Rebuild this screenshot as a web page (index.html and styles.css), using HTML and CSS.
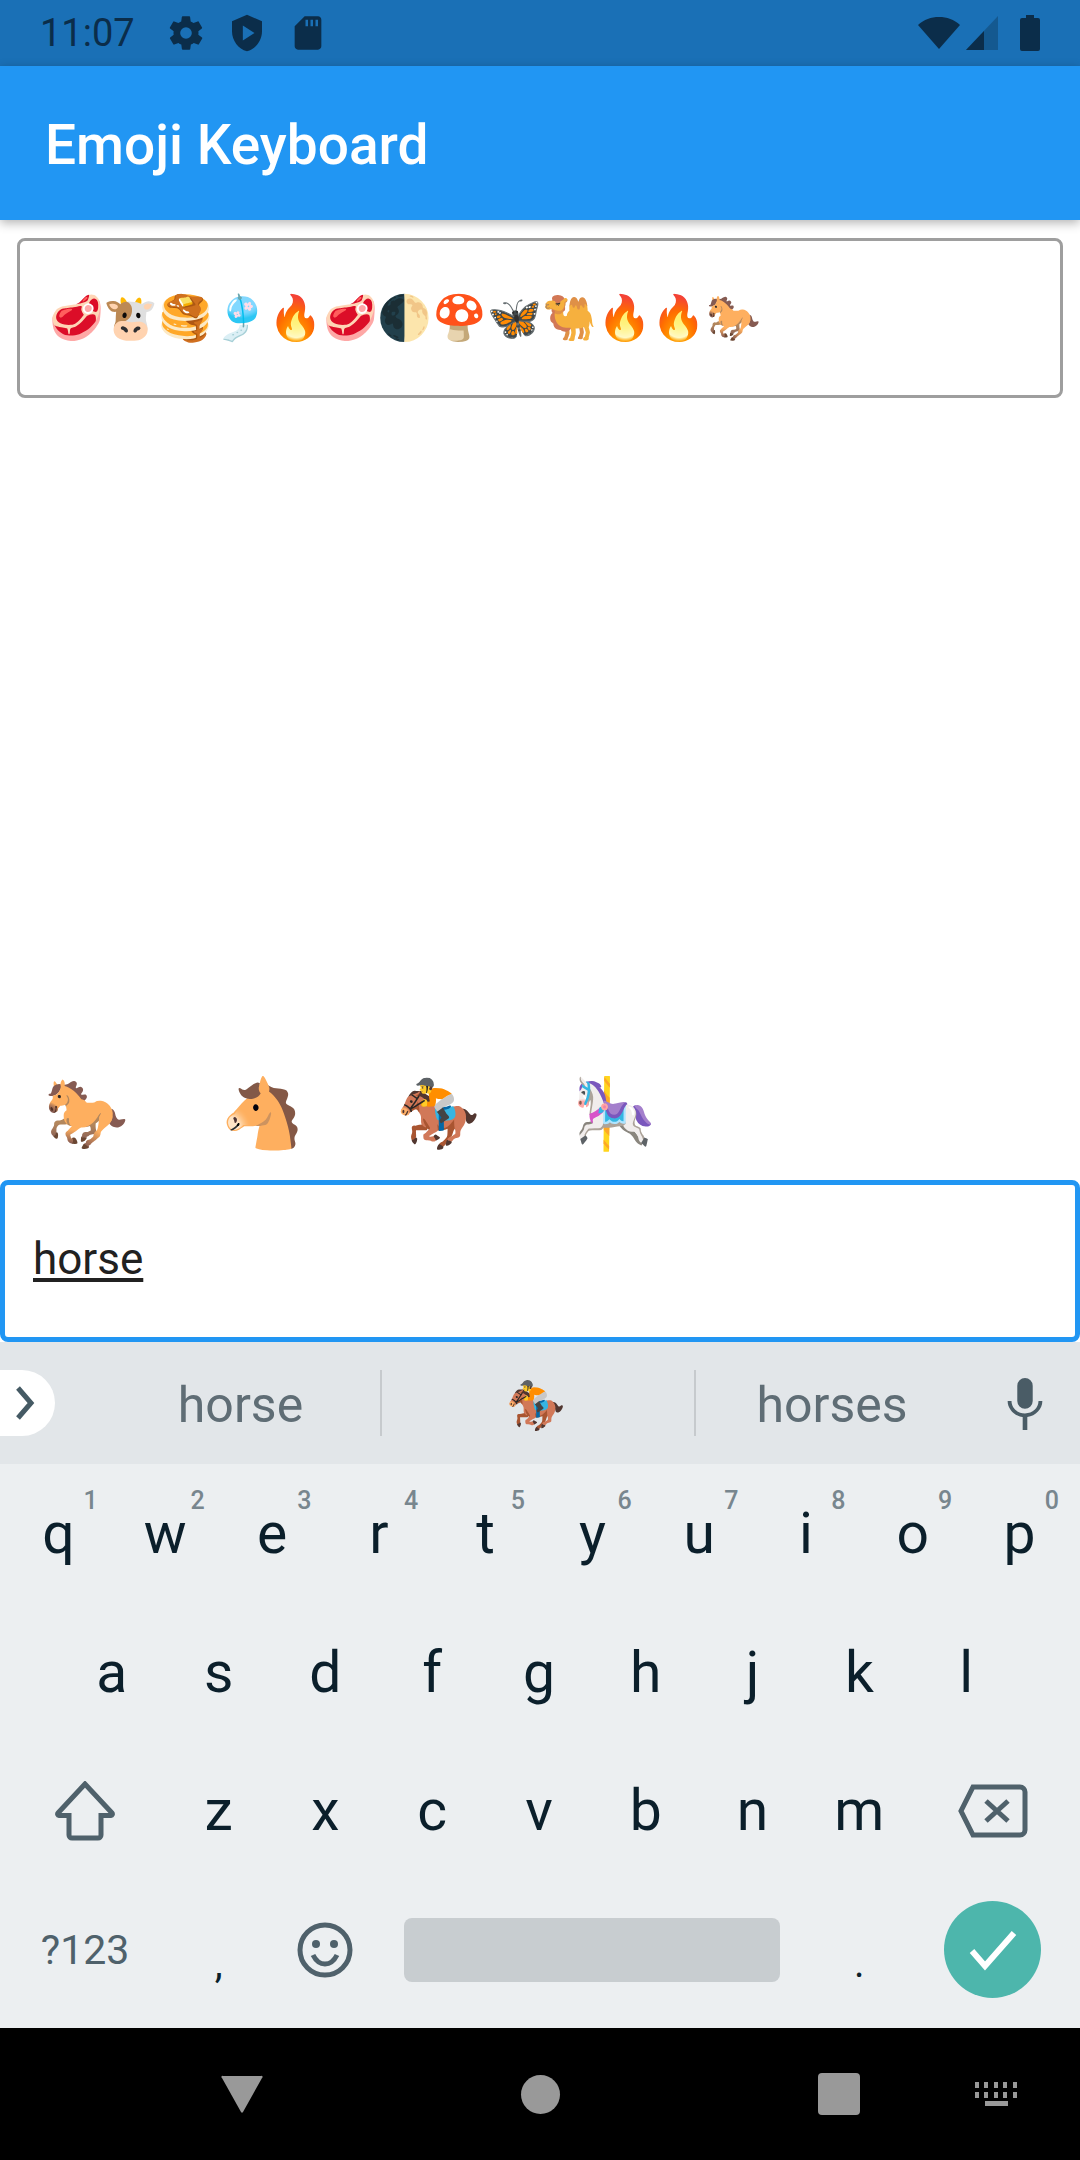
FILE: index.html
```html
<!DOCTYPE html>
<html lang="en">
<head>
<meta charset="utf-8">
<title>Emoji Keyboard</title>
<link rel="stylesheet" href="styles.css">
</head>
<body>
<div class="screen">
  <div class="status">
    <span class="time">11:07</span>
    <svg class="si gear" viewBox="0 0 24 24"><path d="M19.4 13c.04-.33.1-.66.1-1s-.06-.67-.1-1l2.1-1.65c.2-.15.25-.42.12-.64l-2-3.46c-.12-.22-.4-.3-.6-.22l-2.5 1c-.52-.4-1.08-.73-1.7-.98l-.37-2.65A.5.5 0 0 0 14 2h-4a.5.5 0 0 0-.5.42l-.37 2.65c-.62.25-1.18.58-1.7.98l-2.5-1a.5.5 0 0 0-.6.22l-2 3.46c-.13.22-.07.49.12.64L4.6 11c-.04.33-.1.66-.1 1s.06.67.1 1l-2.1 1.65c-.2.15-.25.42-.12.64l2 3.46c.12.22.4.3.6.22l2.5-1c.52.4 1.08.73 1.7.98l.37 2.65c.05.24.26.42.5.42h4c.25 0 .46-.18.5-.42l.37-2.65c.62-.25 1.18-.58 1.7-.98l2.5 1c.22.08.48 0 .6-.22l2-3.46c.13-.22.07-.49-.12-.64zM12 15.5a3.5 3.5 0 1 1 0-7 3.500 3.500 0 0 1 0 7z"/></svg>
    <svg class="si shield" viewBox="0 0 24 24"><path fill-rule="evenodd" d="M12 1 3 5v6c0 5.600 3.800 10.700 9 12 5.200-1.300 9-6.400 9-12V5zM9.500 7.500v9l7-4.500z"/></svg>
    <svg class="si sd" viewBox="0 0 24 24"><path fill-rule="evenodd" d="M18 2h-8L4 8v12c0 1.100.9 2 2 2h12c1.100 0 2-.9 2-2V4c0-1.100-.9-2-2-2zM12 8h-1.500V4H12zm3 0h-1.500V4H15zm3 0h-1.500V4H18z"/></svg>
    <span class="spacer"></span>
    <svg class="sr wifi" viewBox="0 0 44 34"><path d="M22 33 1 9C7 3.500 14 1 22 1s15 2.500 21 8z"/></svg>
    <svg class="sr cell" viewBox="0 0 34 36"><path class="dim" d="M33 1v34H1z"/><path d="M19 16v19H1z"/></svg>
    <svg class="sr batt" viewBox="0 0 20 36"><path d="M6 0h8v3h4a2 2 0 0 1 2 2v29a2 2 0 0 1-2 2H2a2 2 0 0 1-2-2V5a2 2 0 0 1 2-2h4z"/></svg>
  </div>
  <header class="appbar"><h1>Emoji Keyboard</h1></header>
  <main class="content">
    <div class="output">
      <span class="em">🥩</span><span class="em">🐮</span><span class="em">🥞</span><span class="em">🎐</span><span class="em">🔥</span><span class="em">🥩</span><span class="em">🌓</span><span class="em">🍄</span><span class="em">🦋</span><span class="em">🐫</span><span class="em">🔥</span><span class="em">🔥</span><span class="em">🐎</span>
    </div>
    <div class="grow"></div>
    <div class="results">
      <span class="res">🐎</span><span class="res">🐴</span><span class="res">🏇</span><span class="res">🎠</span>
    </div>
    <div class="input"><span class="typed">horse</span></div>
  </main>
  <section class="kb">
    <div class="strip">
      <div class="chev"><svg viewBox="0 0 20 36"><path d="M3 3l13 15L3 33"/></svg></div>
      <div class="sug s1">horse</div>
      <div class="sep"></div>
      <div class="sug s2">🏇</div>
      <div class="sep"></div>
      <div class="sug s3">horses</div>
      <svg class="mic" viewBox="0 0 24 28"><path d="M12 17a4 4 0 0 0 4-4V5a4 4 0 0 0-8 0v8a4 4 0 0 0 4 4zm7-4c0 3.600-3 6.400-7 6.400S5 16.600 5 13H3c0 4.200 3.400 7.700 7.800 8.300V28h2.400v-6.700C17.600 20.700 21 17.200 21 13z"/></svg>
    </div>
    <div class="keys">
      <div class="row">
        <div class="k"><sup>1</sup>q</div><div class="k"><sup>2</sup>w</div><div class="k"><sup>3</sup>e</div><div class="k"><sup>4</sup>r</div><div class="k"><sup>5</sup>t</div><div class="k"><sup>6</sup>y</div><div class="k"><sup>7</sup>u</div><div class="k"><sup>8</sup>i</div><div class="k"><sup>9</sup>o</div><div class="k"><sup>0</sup>p</div>
      </div>
      <div class="row inset">
        <div class="k">a</div><div class="k">s</div><div class="k">d</div><div class="k">f</div><div class="k">g</div><div class="k">h</div><div class="k">j</div><div class="k">k</div><div class="k">l</div>
      </div>
      <div class="row">
        <div class="k wide"><svg class="ic shift" viewBox="0 0 62 60"><path d="M31 3 4 32a1.500 1.500 0 0 0 1 2.500h10V54a3 3 0 0 0 3 3h26a3 3 0 0 0 3-3V34.500h10a1.500 1.500 0 0 0 1-2.500z"/></svg></div>
        <div class="k">z</div><div class="k">x</div><div class="k">c</div><div class="k">v</div><div class="k">b</div><div class="k">n</div><div class="k">m</div>
        <div class="k wide"><svg class="ic del" viewBox="0 0 70 54"><path d="M15 3h47a5 5 0 0 1 5 5v38a5 5 0 0 1-5 5H15L3 27zM28 17l22 20M50 17 28 37"/></svg></div>
      </div>
      <div class="row last">
        <div class="k wide sym">?123</div>
        <div class="k punct">,</div>
        <div class="k"><svg class="ic smile" viewBox="0 0 56 56"><circle class="o" cx="28" cy="28" r="25"/><circle class="d" cx="19" cy="22" r="4"/><circle class="d" cx="37" cy="22" r="4"/><path class="o" d="M16 33c3 6 7 9 12 9s9-3 12-9"/></svg></div>
        <div class="space-cell"><div class="space"></div></div>
        <div class="k punct">.</div>
        <div class="k wide"><div class="enter"><svg viewBox="0 0 50 42"><path d="M4 22l13 15L46 4"/></svg></div></div>
      </div>
    </div>
  </section>
  <nav class="navbar">
    <svg class="back" viewBox="0 0 44 40"><path d="M3 2h38a1 1 0 0 1 1 2L23 38a1.200 1.200 0 0 1-2 0L2 4a1 1 0 0 1 1-2z"/></svg>
    <span class="home"></span>
    <span class="recent"></span>
    <svg class="kbd" viewBox="0 0 42 24"><path d="M0 0h4v6H0zM9 0h4v6H9zM19 0h4v6h-4zM28 0h4v6h-4zM38 0h4v6h-4zM0 10h4v6H0zM9 10h4v6H9zM19 10h4v6h-4zM28 10h4v6h-4zM38 10h4v6h-4zM10 19h23v5H10z"/></svg>
  </nav>
</div>
</body>
</html>
```

FILE: styles.css
```css
* { box-sizing: border-box; margin: 0; padding: 0; }
html, body { width: 1080px; height: 2160px; overflow: hidden; background: #fff; }
body { font-family: Roboto, "Noto Sans", sans-serif; }
.screen { width: 1080px; height: 2160px; display: flex; flex-direction: column; }

.status { height: 66px; background: #1a70b6; display: flex; align-items: center; padding: 0 16px 0 40px; color: #0b2d4a; fill: #0b2d4a; flex: none; }
.time { font-size: 38px; width: 126px; }
.si { width: 40px; height: 40px; margin-right: 21px; }
.spacer { flex: 1; }
.sr.wifi { width: 44px; height: 34px; margin-right: 4px; }
.sr.cell { width: 34px; height: 36px; margin-right: 21px; }
.sr.batt { width: 20px; height: 36px; margin-right: 24px; }
.dim { opacity: .35; }

.appbar { height: 154px; flex: none; background: #2196f3; display: flex; align-items: center; padding: 3px 0 0 45px; box-shadow: 0 3px 10px rgba(0,0,0,.3); position: relative; z-index: 1; }
.appbar h1 { color: #fff; font-size: 55px; font-weight: 500; }

.content { flex: 1; display: flex; flex-direction: column; }
.output { margin: 18px 17px 0; height: 160px; border: 3px solid #9e9e9e; border-radius: 8px; display: flex; align-items: center; padding-left: 29px; }
.em { width: 54.8px; font-size: 44px; line-height: 60px; text-align: center; font-family: "Noto Color Emoji", sans-serif; }
.grow { flex: 1; }
.results { display: flex; height: 100px; padding-left: 44px; margin-bottom: 16px; }
.res { width: 176px; font-size: 68px; line-height: 100px; font-family: "Noto Color Emoji", sans-serif; }
.input { height: 162px; border: 5px solid #2196f3; border-radius: 8px; display: flex; align-items: center; padding: 0 0 4px 28px; }
.typed { font-size: 44px; color: #212121; text-decoration: underline; text-underline-offset: 4px; }

.kb { flex: none; }
.strip { height: 122px; background: #e2e6e9; display: flex; align-items: center; position: relative; }
.chev { width: 55px; height: 66px; background: #fff; border-radius: 0 33px 33px 0; display: flex; align-items: center; padding-left: 15px; }
.chev svg { width: 20px; height: 36px; fill: none; stroke: #455a64; stroke-width: 5; }
.sug { font-size: 50px; color: #5f6d75; text-align: center; padding-top: 3px; }
.s1 { width: 325px; padding-left: 46px; }
.s2 { width: 312px; font-size: 48px; padding: 4px 4px 0 0; font-family: "Noto Color Emoji", sans-serif; }
.s3 { width: 276px; padding-right: 4px; }
.sep { width: 2px; height: 66px; background: #c6cacd; }
.mic { width: 48px; height: 54px; fill: #4a5c66; margin-left: 29px; }

.keys { height: 564px; background: #eceff1; display: flex; flex-direction: column; padding: 0 7px 9px 5px; }
.row { flex: 1; display: flex; align-items: center; }
.row.inset { padding: 0 53.4px; }
.k { width: 106.8px; height: 100%; position: relative; display: flex; align-items: center; justify-content: center; font-size: 57px; color: #0b1f2b; }
.k sup { position: absolute; top: 24px; right: 14px; font-size: 25px; font-weight: 500; color: #78868e; line-height: 1; }
.k.wide { width: 160.2px; }
.ic { stroke: #4f616b; fill: none; stroke-width: 5; }
.shift { width: 62px; height: 60px; }
.del { width: 70px; height: 54px; }
.smile { width: 56px; height: 56px; }
.smile .d { fill: #4f616b; stroke: none; }
.sym { font-size: 41px; color: #4f616b; }
.punct { font-size: 40px; padding-top: 28px; }
.space-cell { width: 427.2px; height: 100%; display: flex; align-items: center; justify-content: center; }
.space { width: 376px; height: 64px; background: #c8cdd0; border-radius: 8px; }
.enter { width: 97px; height: 97px; background: #4db6ac; border-radius: 50%; display: flex; align-items: center; justify-content: center; }
.enter svg { width: 50px; height: 42px; fill: none; stroke: #fff; stroke-width: 6; }

.navbar { height: 132px; flex: none; background: #000; position: relative; display: flex; align-items: center; }
.back { width: 44px; height: 40px; fill: #999; margin-left: 220px; }
.home { width: 39px; height: 39px; border-radius: 50%; background: #999; margin-left: 257px; }
.recent { width: 42px; height: 42px; border-radius: 4px; background: #999; margin-left: 258px; }
.kbd { width: 42px; height: 24px; fill: #999; margin-left: 115px; }
```
